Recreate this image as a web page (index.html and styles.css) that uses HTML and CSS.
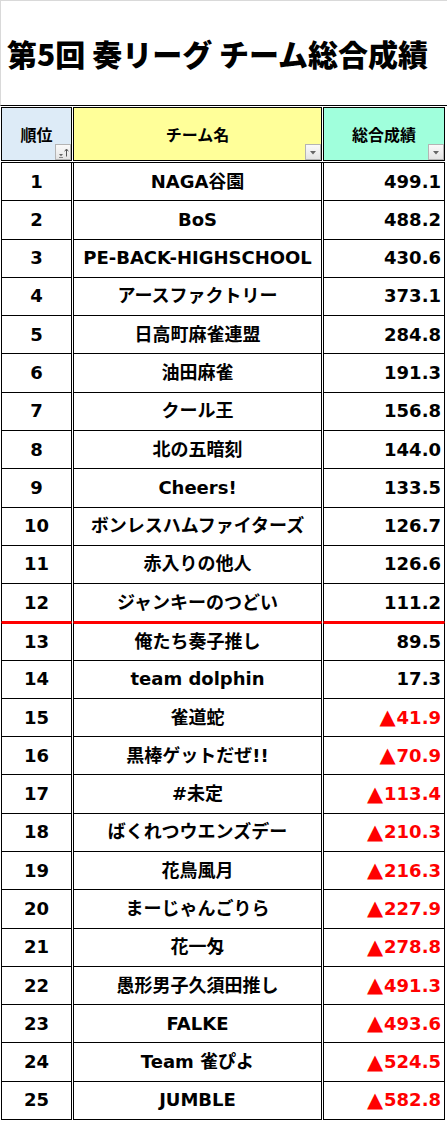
FILE: index.html
```html
<!DOCTYPE html>
<html lang="ja">
<head>
<meta charset="utf-8">
<title>第5回 奏リーグ チーム総合成績</title>
<link rel="stylesheet" href="styles.css">
</head>
<body>
<div class="sheet">
  <div class="title">第5回 奏リーグ チーム総合成績</div>
  <div class="thead">
    <div class="th th-rank">順位<span class="fbtn"><svg width="14" height="14" viewBox="0 0 14 14"><path d="M3 9h4l-2 2.2z" fill="#666"/><path d="M3 12.5h4" stroke="#888" stroke-width="1"/><path d="M10.5 4.5v7" stroke="#555" stroke-width="1"/><path d="M8.7 6.3l1.8-2.3 1.8 2.3" fill="none" stroke="#555" stroke-width="1"/></svg></span></div>
    <div class="th th-name">チーム名<span class="fbtn"><svg width="14" height="14" viewBox="0 0 14 14"><path d="M4 6h6l-3 3.5z" fill="#666"/></svg></span></div>
    <div class="th th-score">総合成績<span class="fbtn"><svg width="14" height="14" viewBox="0 0 14 14"><path d="M4 6h6l-3 3.5z" fill="#666"/></svg></span></div>
  </div>
  <div class="tbody">
    <div class="td">1</div><div class="td">NAGA谷園</div><div class="td score">499.1</div>
    <div class="td">2</div><div class="td">BoS</div><div class="td score">488.2</div>
    <div class="td">3</div><div class="td">PE-BACK-HIGHSCHOOL</div><div class="td score">430.6</div>
    <div class="td">4</div><div class="td">アースファクトリー</div><div class="td score">373.1</div>
    <div class="td">5</div><div class="td">日高町麻雀連盟</div><div class="td score">284.8</div>
    <div class="td">6</div><div class="td">油田麻雀</div><div class="td score">191.3</div>
    <div class="td">7</div><div class="td">クール王</div><div class="td score">156.8</div>
    <div class="td">8</div><div class="td">北の五暗刻</div><div class="td score">144.0</div>
    <div class="td">9</div><div class="td">Cheers!</div><div class="td score">133.5</div>
    <div class="td">10</div><div class="td">ボンレスハムファイターズ</div><div class="td score">126.7</div>
    <div class="td">11</div><div class="td">赤入りの他人</div><div class="td score">126.6</div>
    <div class="td cut">12</div><div class="td cut">ジャンキーのつどい</div><div class="td score cut">111.2</div>
    <div class="td after">13</div><div class="td after">俺たち奏子推し</div><div class="td score after">89.5</div>
    <div class="td">14</div><div class="td">team dolphin</div><div class="td score">17.3</div>
    <div class="td">15</div><div class="td">雀道蛇</div><div class="td score neg"><span class="tri">▲</span>41.9</div>
    <div class="td">16</div><div class="td">黒棒ゲットだぜ!!</div><div class="td score neg"><span class="tri">▲</span>70.9</div>
    <div class="td">17</div><div class="td">#未定</div><div class="td score neg"><span class="tri">▲</span>113.4</div>
    <div class="td">18</div><div class="td">ばくれつウエンズデー</div><div class="td score neg"><span class="tri">▲</span>210.3</div>
    <div class="td">19</div><div class="td">花鳥風月</div><div class="td score neg"><span class="tri">▲</span>216.3</div>
    <div class="td">20</div><div class="td">まーじゃんごりら</div><div class="td score neg"><span class="tri">▲</span>227.9</div>
    <div class="td">21</div><div class="td">花一匁</div><div class="td score neg"><span class="tri">▲</span>278.8</div>
    <div class="td">22</div><div class="td">愚形男子久須田推し</div><div class="td score neg"><span class="tri">▲</span>491.3</div>
    <div class="td">23</div><div class="td">FALKE</div><div class="td score neg"><span class="tri">▲</span>493.6</div>
    <div class="td">24</div><div class="td">Team 雀ぴよ</div><div class="td score neg"><span class="tri">▲</span>524.5</div>
    <div class="td">25</div><div class="td">JUMBLE</div><div class="td score neg"><span class="tri">▲</span>582.8</div>
  </div>
</div>
</body>
</html>
```

FILE: styles.css
```css
* {
  box-sizing: border-box;
}

html,
body {
  margin: 0;
  padding: 0;
  background: #fff;
}

body {
  font-family: "DejaVu Sans", "Noto Sans CJK JP", sans-serif;
  color: #000;
}

.sheet {
  width: 447px;
  height: 1121px;
  overflow: hidden;
}

.title {
  height: 106px;
  border-top: 1px solid #d9d9d9;
  border-left: 1px solid #d9d9d9;
  border-bottom: 1px solid #000;
  display: flex;
  align-items: center;
  padding-left: 6px;
  font-family: "Noto Sans CJK JP", sans-serif;
  font-weight: 900;
  font-size: 30px;
  line-height: 1;
  white-space: nowrap;
}

.thead {
  display: grid;
  grid-template-columns: 71px 249px 122px;
  column-gap: 1px;
  margin: 1px 0 1px 1px;
}

.th {
  position: relative;
  height: 54px;
  border: 1px solid #000;
  display: flex;
  align-items: center;
  justify-content: center;
  font-family: "Noto Sans CJK JP", sans-serif;
  font-weight: 700;
  font-size: 16px;
  line-height: 1;
}

.th-rank {
  background: #ddebf7;
}

.th-name {
  background: #ffff99;
}

.th-score {
  background: #a0ffdc;
}

.fbtn {
  position: absolute;
  right: 0;
  bottom: 0;
  width: 16px;
  height: 16px;
  border: 1px solid #b4b4b4;
  background: linear-gradient(#fafafa, #e4e4e4);
  display: block;
}

.fbtn svg {
  display: block;
}

.tbody {
  margin-left: 1px;
  width: 444px;
  height: 958px;
  border-top: 1px solid #000;
  display: grid;
  grid-template-columns: 71px 249px 122px;
  grid-template-rows: repeat(25, 1fr);
  column-gap: 1px;
}

.td {
  border: 1px solid #000;
  border-top: 0;
  display: flex;
  align-items: center;
  justify-content: center;
  font-weight: 700;
  font-size: 18px;
  line-height: 1;
  white-space: nowrap;
  overflow: hidden;
}

.score {
  justify-content: flex-end;
  padding-right: 3px;
}

.neg {
  color: #ff0000;
}

.tri {
  font-size: 21px;
  margin-right: 1px;
}

.cut {
  border-bottom-color: #ff0000;
}

.after {
  border-top: 2px solid #ff0000;
}
```
